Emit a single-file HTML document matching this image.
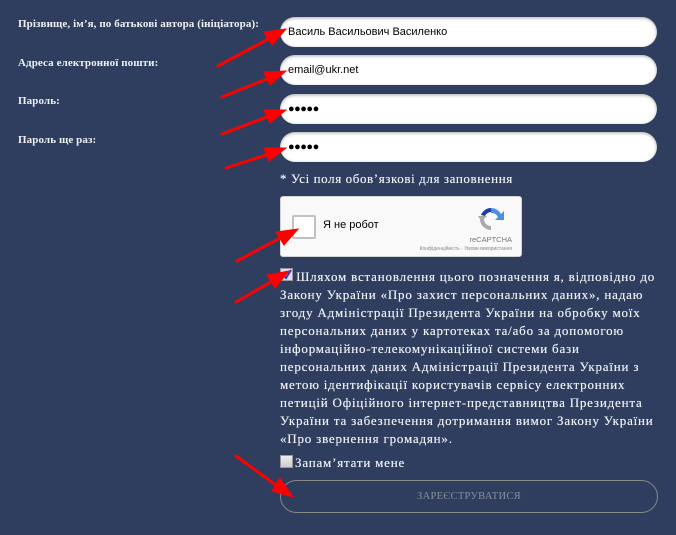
<!DOCTYPE html>
<html><head><meta charset="utf-8"><style>
body{margin:0;width:676px;height:535px;background:#2f3e5f;position:relative;overflow:hidden;font-family:"Liberation Serif","DejaVu Serif",serif;color:#eef0f4}
.lab{position:absolute;left:18px;font-size:11px;font-weight:bold;letter-spacing:0.1px}
.inp{position:absolute;left:280px;width:377px;height:30px;background:#fff;border-radius:15px;box-shadow:inset 0 1px 3px rgba(0,0,0,.35);font-family:"Liberation Sans",sans-serif;font-size:11px;color:#000;line-height:30px;padding-left:8px;box-sizing:border-box}
.dots{font-size:11px;letter-spacing:-0.5px}
.t{position:absolute;left:280px;font-size:13px;letter-spacing:0.8px;line-height:18px;text-shadow:0 0 0.4px #eef0f4}
.cap{position:absolute;left:280px;top:196px;width:242px;height:61px;background:#f9f9f9;border:1px solid #d3d3d3;border-radius:3px;box-sizing:border-box;font-family:"Liberation Sans",sans-serif}
.cb{position:absolute;width:11px;height:11px;border:1px solid #999;background:linear-gradient(#eee,#ccc)}
.btn{position:absolute;left:280px;top:480px;width:378px;height:33px;border:1px solid #888;border-radius:17px;box-sizing:border-box;text-align:center;line-height:31px;font-size:10.5px;color:#8a8f99;letter-spacing:.3px}
</style></head><body>
<div class="lab" style="top:18px">Прізвище, ім’я, по батькові автора (ініціатора):</div>
<div class="lab" style="top:57px">Адреса електронної пошти:</div>
<div class="lab" style="top:95px">Пароль:</div>
<div class="lab" style="top:134px">Пароль ще раз:</div>
<div class="inp" style="top:17px">Василь Васильович Василенко</div>
<div class="inp" style="top:55px">email@ukr.net</div>
<div class="inp dots" style="top:94px">●●●●●</div>
<div class="inp dots" style="top:132px">●●●●●</div>
<div class="t" style="top:170px;letter-spacing:0.6px">* Усі поля обов’язкові для заповнення</div>
<div class="cap">
 <div style="position:absolute;left:11px;top:18px;width:20px;height:20px;background:#fff;border:2px solid #c1c1c1;border-radius:2px"></div>
 <div style="position:absolute;left:42px;top:22px;font-size:11px;color:#000">Я не робот</div>
 <svg style="position:absolute;left:196px;top:8px" width="28" height="28" viewBox="0 0 28 28"><path d="M14 3a11 11 0 0 1 10 6l3-3v9h-9l3-3a7 7 0 0 0-7-4z" fill="#4a90e2"/><path d="M14 3a11 11 0 0 0-10 7l4 1a7 7 0 0 1 6-4z" fill="#1c3aa9"/><path d="M3 14a11 11 0 0 0 11 11v-4a7 7 0 0 1-7-7l3-3H1z" fill="#aaa"/></svg>
 <div style="position:absolute;right:9px;top:38px;font-size:7.5px;color:#777">reCAPTCHA</div>
 <div style="position:absolute;right:9px;top:49px;font-size:5px;color:#888">Конфіденційність · Умови використання</div>
</div>
<div class="cb" style="left:280px;top:268px;background:#dde"><svg width="11" height="11" style="position:absolute;left:0;top:0"><path d="M2 6l3 3 5-8" stroke="#2a3fc0" stroke-width="2" fill="none"/></svg></div>
<div class="t" style="top:268px;width:396px">&nbsp;&nbsp;&nbsp;&nbsp;Шляхом встановлення цього позначення я, відповідно до<br>Закону України «Про захист персональних даних», надаю<br>згоду Адміністрації Президента України на обробку моїх<br>персональних даних у картотеках та/або за допомогою<br>інформаційно-телекомунікаційної системи бази<br>персональних даних Адміністрації Президента України з<br>метою ідентифікації користувачів сервісу електронних<br>петицій Офіційного інтернет-представництва Президента<br>України та забезпечення дотримання вимог Закону України<br>«Про звернення громадян».</div>
<div class="cb" style="left:280px;top:455px"></div>
<div class="t" style="left:295px;top:454px">Запам’ятати мене</div>
<div class="btn">ЗАРЕЄСТРУВАТИСЯ</div>
<svg width="676" height="535" style="position:absolute;left:0;top:0">
<g stroke="#f00" stroke-width="3" stroke-linecap="round" fill="#f00">
<line x1="218" y1="66" x2="272" y2="37"/><polygon points="286,29 264,32 272,45" stroke-width="1"/>
<line x1="222" y1="97" x2="272" y2="77"/><polygon points="286,71 264,72 270,85" stroke-width="1"/>
<line x1="222" y1="134" x2="272" y2="115"/><polygon points="286,110 264,110 270,123" stroke-width="1"/>
<line x1="226" y1="168" x2="272" y2="153"/><polygon points="286,148 264,148 269,161" stroke-width="1"/>
<line x1="237" y1="261" x2="284" y2="236"/><polygon points="298,229 276,232 284,245" stroke-width="1"/>
<line x1="236" y1="302" x2="276" y2="279"/><polygon points="289,271 267,275 275,288" stroke-width="1"/>
<line x1="236" y1="456" x2="280" y2="488"/><polygon points="293,497 280,478 272,491" stroke-width="1"/>
</g></svg>
</body></html>
